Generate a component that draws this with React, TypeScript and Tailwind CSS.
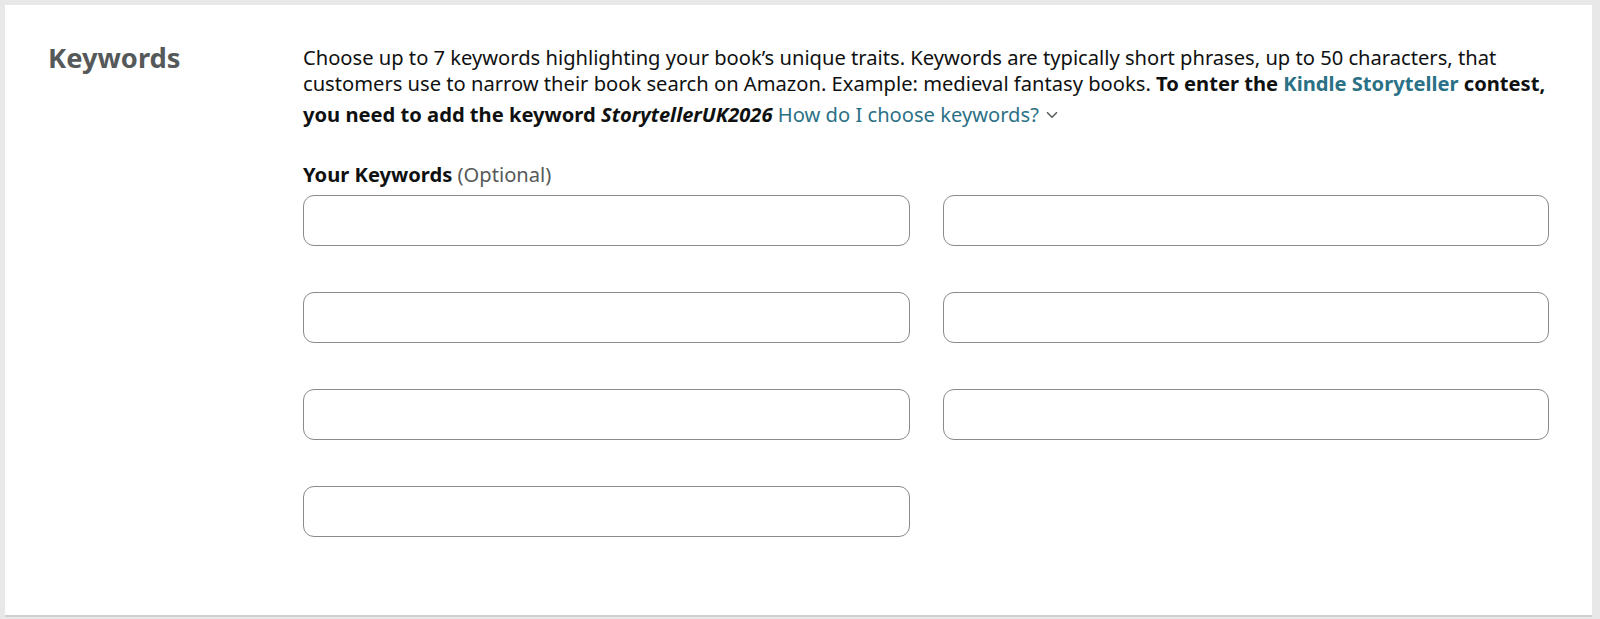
const KeywordInput = () => (
  <input
    type="text"
    className="h-[51px] w-full rounded-[11px] border border-[#888c8c] bg-white px-3 text-[20px] outline-none"
  />
);

export default function App() {
  return (
    <div className="h-[619px] bg-[#e8e8e8] pl-[5px] pr-[8px] pt-[5px] font-['Noto_Sans',sans-serif]">
      <section className="grid h-[612px] grid-cols-[255px_1fr] border-b-2 border-[#d0d0d0] bg-white pl-[43px] pr-[43px] pt-[40px]">
        <h2 className="text-[27.3px] font-bold leading-[26px] text-[#565959]">Keywords</h2>
        <div>
          <p className="text-[20.15px] leading-[25.5px] text-[#0f1111]">
            Choose up to 7 keywords highlighting your book’s unique traits. Keywords are typically short phrases, up
            to 50 characters, that customers use to narrow their book search on Amazon. Example: medieval fantasy
            books. <b>To enter the</b> <a className="font-bold text-[#2b7186]">Kindle Storyteller</a>{" "}
            <b>contest,</b> <b>you need to add the keyword</b> <b className="italic">StorytellerUK2026</b>{" "}
            <a className="inline-flex items-center gap-[7px] pt-[6px] text-[#2b7186]">
              How do I choose keywords?
              <svg viewBox="0 0 12 8" className="h-[8px] w-[12px]" fill="none">
                <path d="M1.5 1.75 6 6.25l4.5-4.5" stroke="#5f6464" strokeWidth="1.7" strokeLinecap="round" strokeLinejoin="round" />
              </svg>
            </a>
          </p>
          <div className="mt-[34px] text-[20.15px] leading-[25.5px]">
            <span className="font-bold text-[#0f1111]">Your Keywords</span>{" "}
            <span className="text-[#565959]">(Optional)</span>
          </div>
          <div className="mt-[8px] grid grid-cols-2 gap-x-[33px] gap-y-[46px]">
            <KeywordInput />
            <KeywordInput />
            <KeywordInput />
            <KeywordInput />
            <KeywordInput />
            <KeywordInput />
            <KeywordInput />
          </div>
        </div>
      </section>
    </div>
  );
}
